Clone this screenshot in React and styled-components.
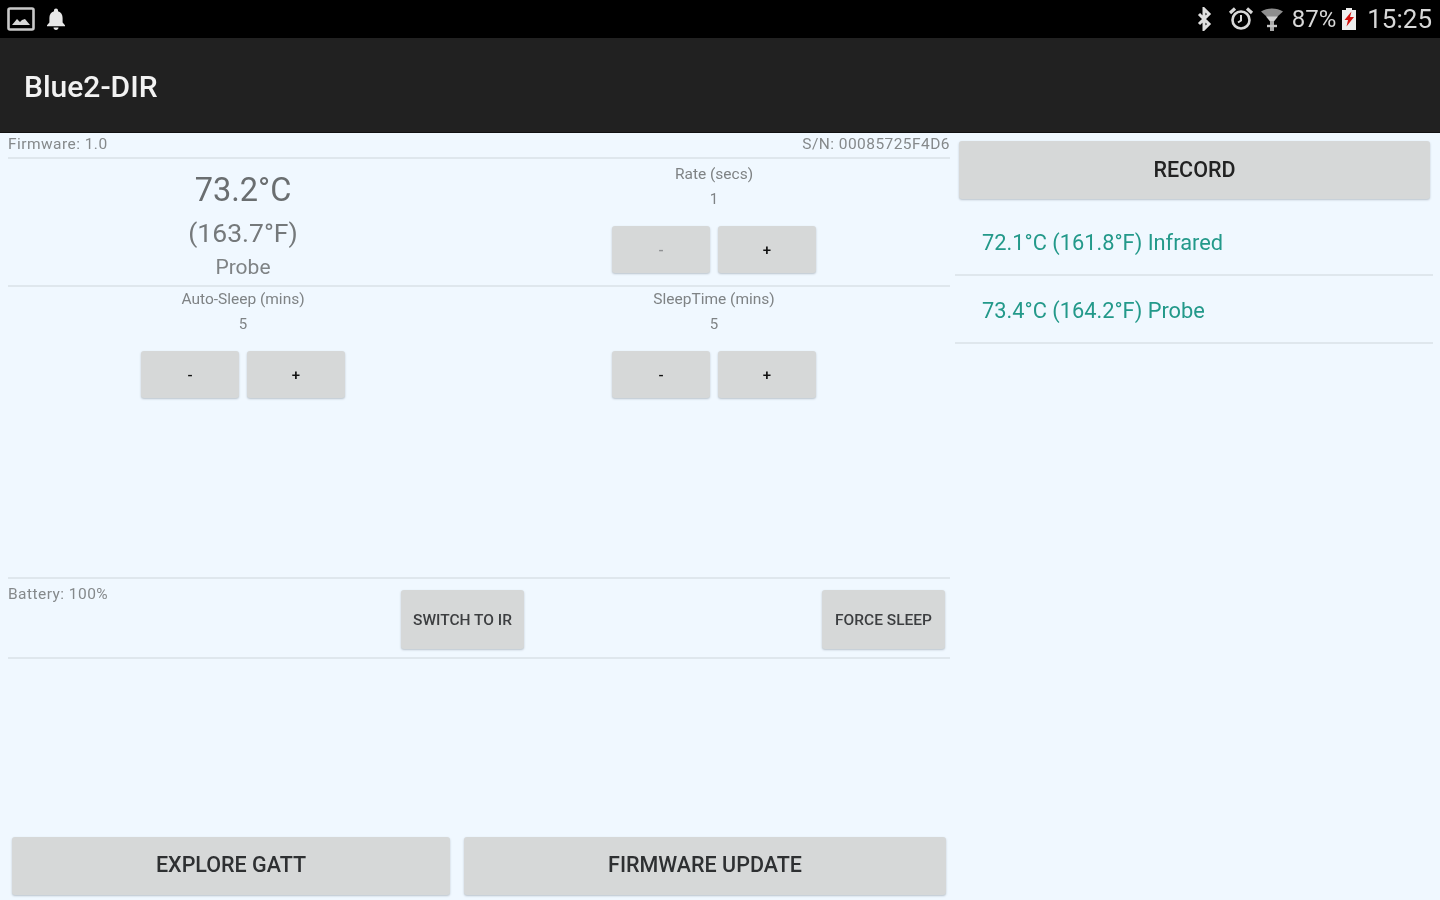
import React from "react"
import styled, { createGlobalStyle } from "styled-components"

const GlobalStyle = createGlobalStyle`
  html, body {
    margin: 0;
    padding: 0;
    background: #f0f8ff;
  }
  * {
    box-sizing: border-box;
  }
`

// the reference is a soft, upscaled capture
const Page = styled.div`
  width: 1440px;
  height: 900px;
  overflow: hidden;
  display: flex;
  flex-direction: column;
  background: #f0f8ff;
  font-family: Roboto, "Liberation Sans", sans-serif;
  filter: blur(0.55px);
`

const StatusBar = styled.div`
  height: 38px;
  flex: none;
  background: #000;
  display: flex;
  align-items: center;
  justify-content: space-between;
  padding: 0 8px 0 7px;
  color: #d6d6d6;
`

const StatusGroup = styled.div`
  display: flex;
  align-items: center;
`

const StatusIcon = styled.svg`
  display: block;
  flex: none;
  margin-left: ${p => p.$left || 0}px;
`

const StatusText = styled.span`
  font-size: ${p => p.$size}px;
  margin-left: ${p => p.$left}px;
  line-height: 38px;
  color: #d8d8d8;
`

const AppBar = styled.div`
  height: 95px;
  flex: none;
  background: #212121;
  display: flex;
  align-items: center;
  padding: 2px 0 0 24px;
  border-bottom: 1px solid #111;
`

const Title = styled.h1`
  margin: 0;
  font-size: 30px;
  font-weight: 500;
  color: #f2f2f2;
`

const Content = styled.div`
  flex: 1;
  display: flex;
  min-height: 0;
`

const LeftPane = styled.div`
  width: 958px;
  padding-left: 8px;
  padding-right: 8px;
  display: flex;
  flex-direction: column;
`

const RightPane = styled.div`
  width: 482px;
  padding: 8px 7px 0 0;
  display: flex;
  flex-direction: column;
  align-items: stretch;
`

const InfoRow = styled.div`
  height: 26px;
  display: flex;
  justify-content: space-between;
  align-items: center;
  padding-bottom: 2px;
  border-bottom: 2px solid #dfe7ed;
`

const SmallText = styled.span`
  font-size: 15.5px;
  color: #85898b;
  letter-spacing: 0.45px;
`

const TwoCols = styled.div`
  height: ${p => p.$height}px;
  flex: none;
  display: grid;
  grid-template-columns: 470px 472px;
  border-bottom: ${p => (p.$noRule ? "none" : "2px solid #dfe7ed")};
`

const Col = styled.div`
  display: flex;
  flex-direction: column;
  align-items: center;
  padding-top: ${p => p.$top || 0}px;
`

const TempMain = styled.div`
  font-size: 32.5px;
  line-height: 40px;
  color: #6a6e70;
  margin-top: 11px;
`

const TempSub = styled.div`
  font-size: 26.5px;
  line-height: 34px;
  margin-top: 6px;
  color: #75797b;
`

const TempSource = styled.div`
  font-size: 21px;
  line-height: 26px;
  margin-top: 4px;
  color: #7f8385;
`

const StepLabel = styled.div`
  font-size: 15.5px;
  line-height: 18px;
  color: #7f8385;
`

const StepValue = styled.div`
  font-size: 15px;
  line-height: 18px;
  margin-top: 7px;
  color: #7f8385;
`

const Stepper = styled.div`
  display: flex;
  gap: 8px;
  margin-top: 18px;
`

const Button = styled.button`
  appearance: none;
  border: none;
  margin: 0;
  padding: 0;
  font-family: inherit;
  background: #d6d8d8;
  border-radius: 3px;
  box-shadow: 0 1px 2px rgba(120, 130, 140, 0.45);
  color: #333;
  font-weight: 500;
  text-transform: uppercase;
`

const StepButton = styled(Button)`
  width: 98px;
  height: 47px;
  font-size: 15px;
  color: ${p => (p.$faint ? "#8f9193" : "#111")};
`

const ActionRow = styled.div`
  height: 82px;
  flex: none;
  display: grid;
  grid-template-columns: 393px 1fr auto;
  border-top: 2px solid #dfe7ed;
  border-bottom: 2px solid #dfe7ed;
  margin-top: auto;
  padding-right: 5px;
`

const BatteryText = styled(SmallText)`
  padding-top: 6px;
`

const ActionButton = styled(Button)`
  width: 123px;
  height: 59px;
  margin-top: 11px;
  font-size: 15.5px;
  color: #3c3e40;
`

const Spacer = styled.div`
  height: 178px;
  flex: none;
`

const BottomRow = styled.div`
  display: flex;
  gap: 14px;
  padding: 0 4px;
  height: 63px;
  flex: none;
`

const WideButton = styled(Button)`
  height: 58px;
  padding-bottom: 3px;
  font-size: 21.5px;
  flex: ${p => p.$grow};
  color: #2e3032;
`

const RecordButton = styled(Button)`
  height: 58px;
  margin: 0 3px 0 1px;
  padding-bottom: 2px;
  font-size: 21.5px;
  color: #222;
`

const ReadingList = styled.ul`
  list-style: none;
  margin: 9px 0 0 -3px;
  padding: 0;
`

const Reading = styled.li`
  height: 68px;
  display: flex;
  align-items: center;
  padding: 2px 0 0 27px;
  font-size: 21.8px;
  color: #23998a;
  border-bottom: 2px solid #dfe7ed;
`

const ImageIcon = () => (
  <StatusIcon width="28" height="24" viewBox="0 0 28 24">
    <rect x="1.500" y="1.500" width="25" height="21" rx="1.500" fill="none" stroke="#c9c9c9" strokeWidth="2.600" />
    <path d="M5 18l5-6 3 3 2-2 3-1 5 6z" fill="#d8d8d8" />
  </StatusIcon>
)

const BellIcon = () => (
  <StatusIcon $left={10} width="22" height="24" viewBox="0 0 22 24">
    <path d="M11 1.500c1.200 0 2 .8 2 2v.7c3.200.9 4.600 3.600 4.600 6.800v4.500l2.400 2.700v1H2v-1l2.400-2.700V11c0-3.200 1.400-5.900 4.600-6.800v-.7c0-1.200.8-2 2-2z" fill="#e8e8e8" />
    <path d="M8.500 20.500h5c0 1.500-1.100 2.500-2.500 2.500s-2.500-1-2.500-2.500z" fill="#e8e8e8" />
  </StatusIcon>
)

const BluetoothIcon = () => (
  <StatusIcon width="16" height="24" viewBox="0 0 16 24">
    <path d="M3 7l10 10-5 5V2l5 5L3 17" fill="none" stroke="#e0e0e0" strokeWidth="3" />
  </StatusIcon>
)

const AlarmIcon = () => (
  <StatusIcon $left={16} width="26" height="26" viewBox="0 0 26 26">
    <circle cx="13" cy="14" r="8.500" fill="none" stroke="#d8d8d8" strokeWidth="2.600" />
    <path d="M13 9v5.500l-3 2" fill="none" stroke="#d8d8d8" strokeWidth="2" />
    <path d="M2 7l5-4.500M24 7l-5-4.500" stroke="#d8d8d8" strokeWidth="3.200" />
  </StatusIcon>
)

const SignalIcon = () => (
  <StatusIcon $left={6} width="24" height="26" viewBox="0 0 24 26">
    <path d="M1 5.500C7 1.500 17 1.500 23 5.500L17 11H7z" fill="#8e8e8e" />
    <path d="M6 10.500h12L13.500 16h-3z" fill="#d0d0d0" />
    <path d="M10 15h4v10h-4z" fill="#a8a8a8" />
    <path d="M7 20h10" stroke="#c4c4c4" strokeWidth="2.400" />
  </StatusIcon>
)

const BatteryIcon = () => (
  <StatusIcon $left={5} width="16" height="24" viewBox="0 0 16 24">
    <path d="M5 1h6v2h4v20H1V3h4z" fill="#eeeeee" />
    <path d="M10.500 4.500L3.500 13H7l-1.500 6.500L13 10H9z" fill="#d3130f" />
  </StatusIcon>
)

const StepBlock = ({ label, value, top, faint }) => (
  <Col $top={top}>
    <StepLabel>{label}</StepLabel>
    <StepValue>{value}</StepValue>
    <Stepper>
      <StepButton $faint={faint}>-</StepButton>
      <StepButton>+</StepButton>
    </Stepper>
  </Col>
)

const App = () => {
  return (
    <Page>
      <GlobalStyle />
      <StatusBar>
        <StatusGroup>
          <ImageIcon />
          <BellIcon />
        </StatusGroup>
        <StatusGroup>
          <BluetoothIcon />
          <AlarmIcon />
          <SignalIcon />
          <StatusText $size={24} $left={8}>87%</StatusText>
          <BatteryIcon />
          <StatusText $size={26} $left={10}>15:25</StatusText>
        </StatusGroup>
      </StatusBar>
      <AppBar>
        <Title>Blue2-DIR</Title>
      </AppBar>
      <Content>
        <LeftPane>
          <InfoRow>
            <SmallText>Firmware: 1.0</SmallText>
            <SmallText>S/N: 00085725F4D6</SmallText>
          </InfoRow>
          <TwoCols $height={128}>
            <Col>
              <TempMain>73.2°C</TempMain>
              <TempSub>(163.7°F)</TempSub>
              <TempSource>Probe</TempSource>
            </Col>
            <StepBlock label="Rate (secs)" value="1" top={6} faint />
          </TwoCols>
          <TwoCols $height={112} $noRule>
            <StepBlock label="Auto-Sleep (mins)" value="5" top={3} />
            <StepBlock label="SleepTime (mins)" value="5" top={3} />
          </TwoCols>
          <ActionRow>
            <BatteryText>Battery: 100%</BatteryText>
            <div>
              <ActionButton>Switch to IR</ActionButton>
            </div>
            <ActionButton>Force Sleep</ActionButton>
          </ActionRow>
          <Spacer />
          <BottomRow>
            <WideButton $grow={438}>Explore GATT</WideButton>
            <WideButton $grow={482}>Firmware Update</WideButton>
          </BottomRow>
        </LeftPane>
        <RightPane>
          <RecordButton>Record</RecordButton>
          <ReadingList>
            <Reading>72.1°C (161.8°F) Infrared</Reading>
            <Reading>73.4°C (164.2°F) Probe</Reading>
          </ReadingList>
        </RightPane>
      </Content>
    </Page>
  )
}

export default App
